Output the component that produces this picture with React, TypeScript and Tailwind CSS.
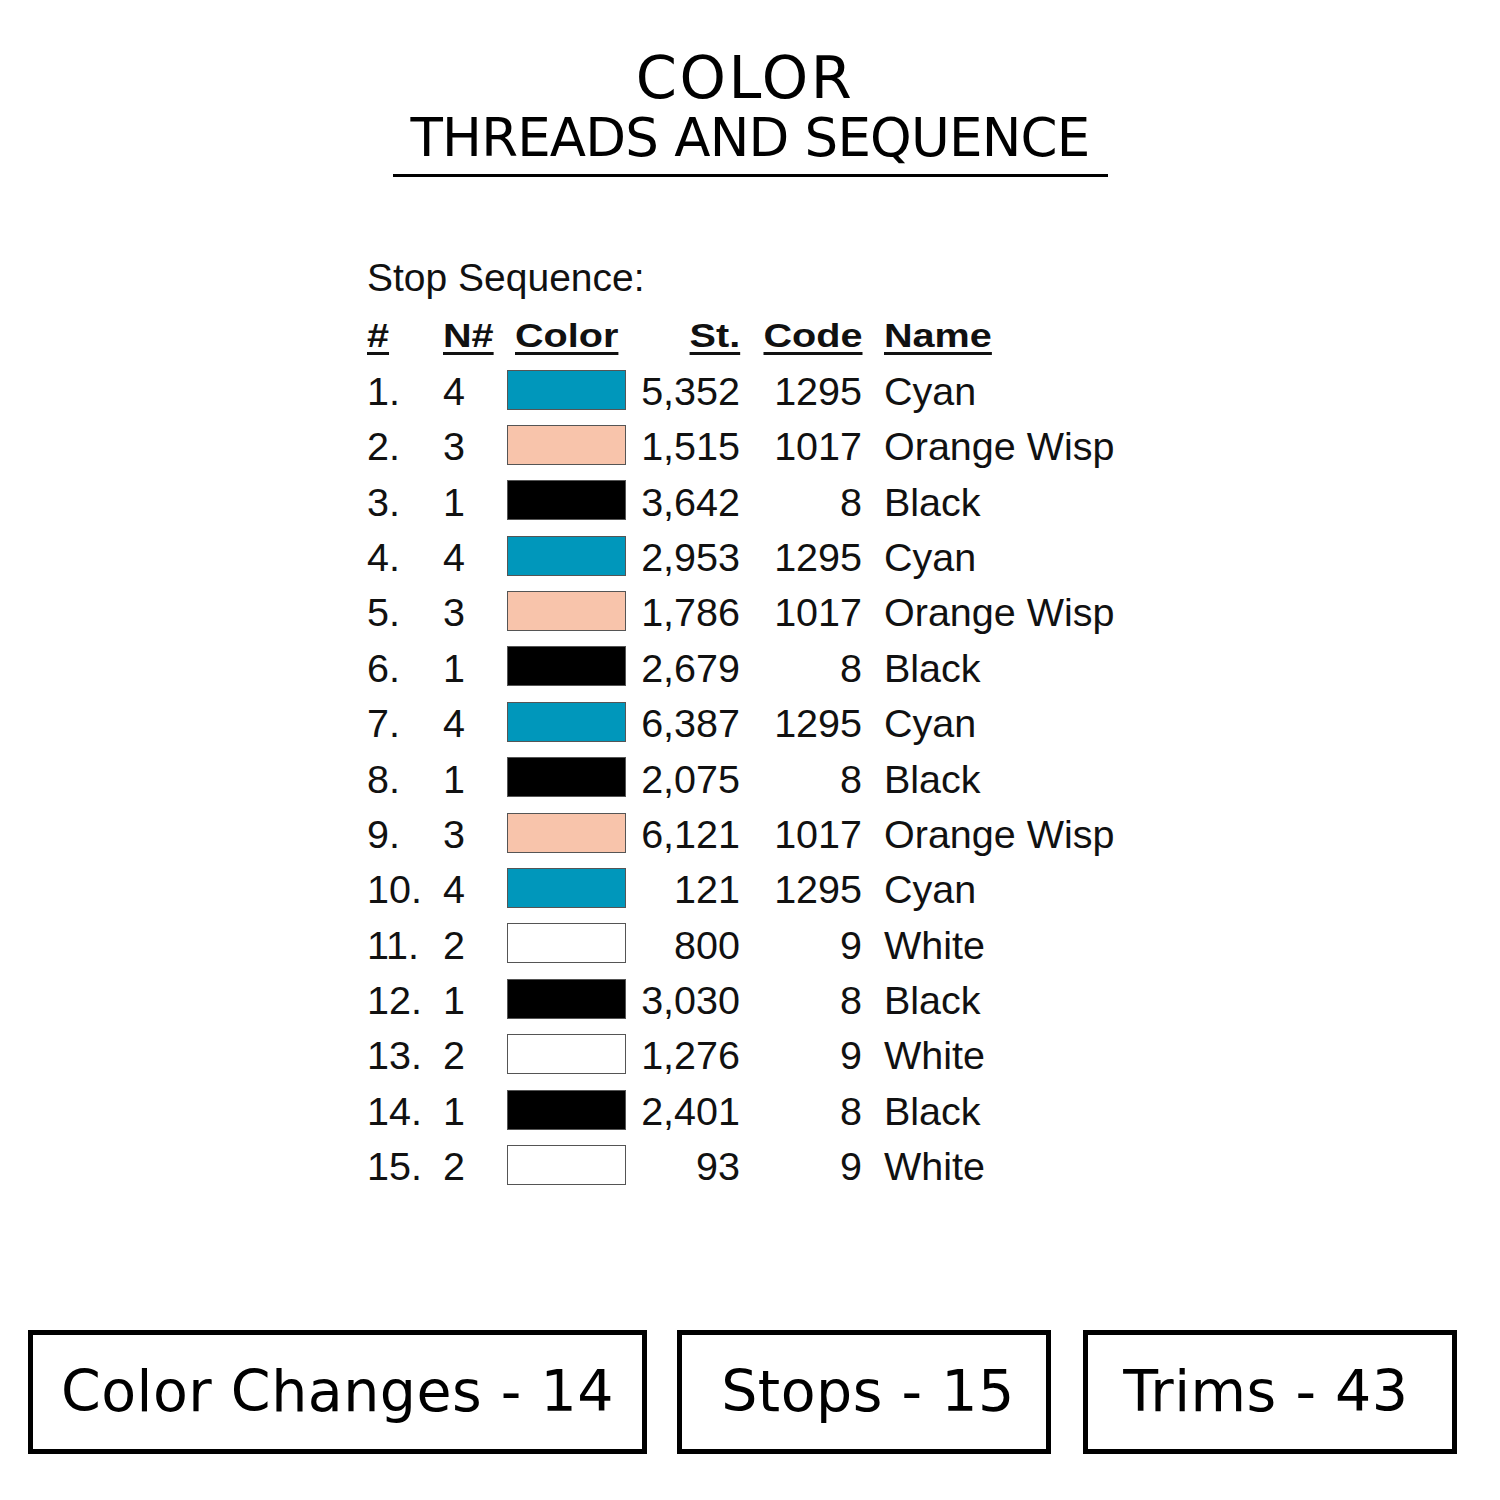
import React from "react";

type Row = {
  n: number;
  needle: number;
  swatch: string;
  st: string;
  code: string;
  name: string;
};

// swatch colours taken from the thread chart
const CYAN = "bg-[#0097bb]";
const PINK = "bg-[#f8c4ab]";
const BLACK = "bg-black";
const WHITE = "bg-white";

const rows: Row[] = [
  { n: 1, needle: 4, swatch: CYAN, st: "5,352", code: "1295", name: "Cyan" },
  { n: 2, needle: 3, swatch: PINK, st: "1,515", code: "1017", name: "Orange Wisp" },
  { n: 3, needle: 1, swatch: BLACK, st: "3,642", code: "8", name: "Black" },
  { n: 4, needle: 4, swatch: CYAN, st: "2,953", code: "1295", name: "Cyan" },
  { n: 5, needle: 3, swatch: PINK, st: "1,786", code: "1017", name: "Orange Wisp" },
  { n: 6, needle: 1, swatch: BLACK, st: "2,679", code: "8", name: "Black" },
  { n: 7, needle: 4, swatch: CYAN, st: "6,387", code: "1295", name: "Cyan" },
  { n: 8, needle: 1, swatch: BLACK, st: "2,075", code: "8", name: "Black" },
  { n: 9, needle: 3, swatch: PINK, st: "6,121", code: "1017", name: "Orange Wisp" },
  { n: 10, needle: 4, swatch: CYAN, st: "121", code: "1295", name: "Cyan" },
  { n: 11, needle: 2, swatch: WHITE, st: "800", code: "9", name: "White" },
  { n: 12, needle: 1, swatch: BLACK, st: "3,030", code: "8", name: "Black" },
  { n: 13, needle: 2, swatch: WHITE, st: "1,276", code: "9", name: "White" },
  { n: 14, needle: 1, swatch: BLACK, st: "2,401", code: "8", name: "Black" },
  { n: 15, needle: 2, swatch: WHITE, st: "93", code: "9", name: "White" },
];

const GRID = "grid grid-cols-[76px_64px_119px_114px_122px_auto] items-center";

const Head: React.FC<{ children: React.ReactNode; right?: boolean }> = ({ children, right }) => (
  <span
    className={`inline-block scale-x-[1.2] font-bold underline decoration-[3px] underline-offset-[5px] ${
      right ? "origin-right" : "origin-left"
    }`}
  >
    {children}
  </span>
);

const StatBox: React.FC<{ label: string; className: string }> = ({ label, className }) => (
  <div
    className={`flex h-[124px] items-center justify-center border-[5px] border-black text-[57px] leading-none tracking-[0.5px] ${className}`}
  >
    {label}
  </div>
);

export default function App() {
  return (
    <div className="flex h-[1500px] w-[1500px] flex-col bg-white text-[#111]">
      {/* Title */}
      <div className="flex flex-col items-center pt-[48px] font-['DejaVu_Sans',sans-serif] text-black">
        <div className="pr-[10px] text-[59px] leading-[60px] tracking-[2.5px]">COLOR</div>
        <div className="text-[53px] leading-[60px] tracking-[-0.8px]">THREADS AND SEQUENCE</div>
        <div className="mt-[6px] h-[3px] w-[715px] bg-black" />
      </div>

      {/* Stop sequence table */}
      <div className="mt-[73px] pl-[367px] font-['Liberation_Sans',Arial,sans-serif]">
        <div className="text-[39px] leading-[55.4px]">Stop Sequence:</div>
        <div className={`${GRID} mt-[3px] h-[55.4px] text-[33px] leading-[55.4px]`}>
          <div>
            <Head>#</Head>
          </div>
          <div>
            <Head>N#</Head>
          </div>
          <div className="pl-[8px]">
            <Head>Color</Head>
          </div>
          <div className="text-right">
            <Head right>St.</Head>
          </div>
          <div className="text-right">
            <Head right>Code</Head>
          </div>
          <div className="pl-[22px]">
            <Head>Name</Head>
          </div>
        </div>
        {rows.map((r) => (
          <div key={r.n} className={`${GRID} h-[55.4px] text-[39.5px] leading-[55.4px]`}>
            <div>{r.n}.</div>
            <div>{r.needle}</div>
            <div className={`mb-[4px] h-[40px] w-[119px] border border-[#555] ${r.swatch}`} />
            <div className="text-right">{r.st}</div>
            <div className="text-right">{r.code}</div>
            <div className="whitespace-nowrap pl-[22px]">{r.name}</div>
          </div>
        ))}
      </div>

      {/* Totals */}
      <div className="mt-[135px] flex pl-[28px] font-['DejaVu_Sans',sans-serif] text-black">
        <StatBox label="Color Changes - 14" className="w-[619px]" />
        <StatBox label="Stops - 15" className="ml-[30px] w-[374px] pl-[8px]" />
        <StatBox label="Trims - 43" className="ml-[32px] w-[374px] pr-[8px]" />
      </div>
    </div>
  );
}
